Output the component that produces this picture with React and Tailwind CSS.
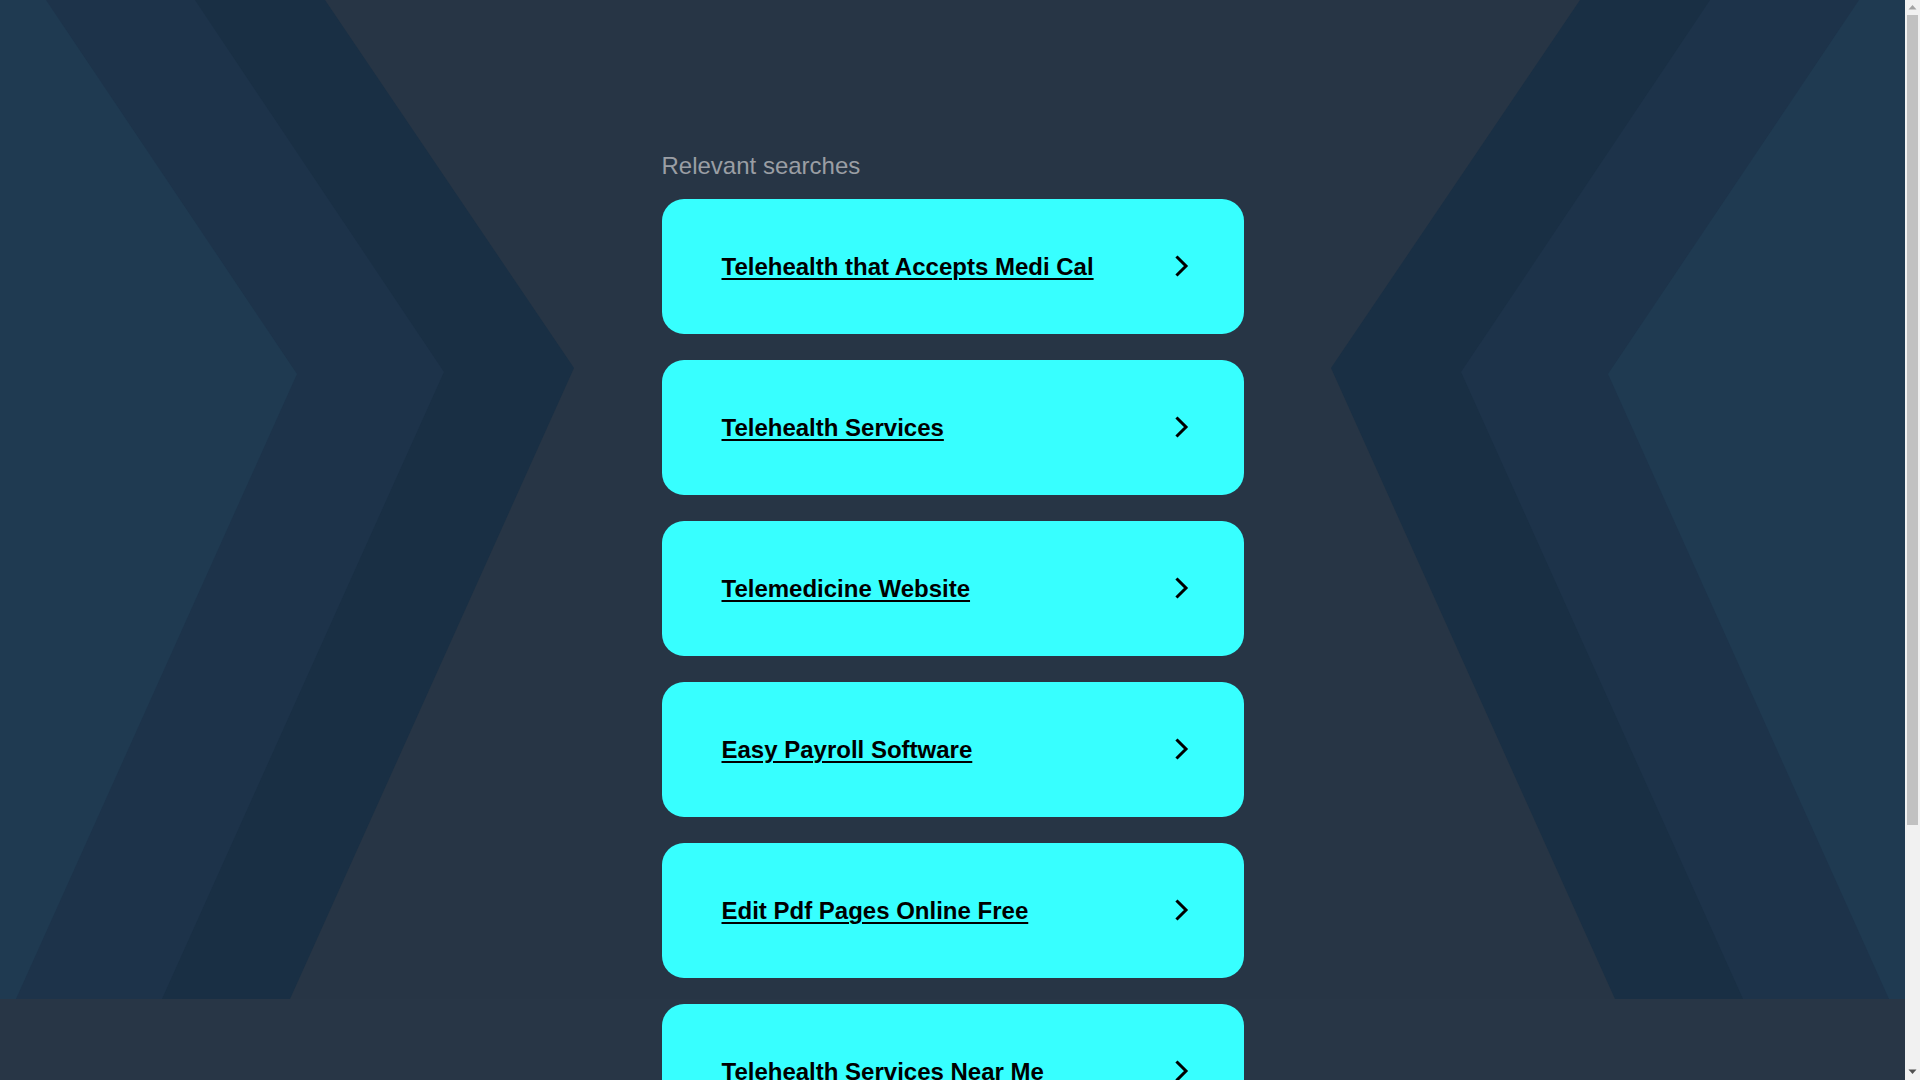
const searches = [
  'Telehealth that Accepts Medi Cal',
  'Telehealth Services',
  'Telemedicine Website',
  'Easy Payroll Software',
  'Edit Pdf Pages Online Free',
  'Telehealth Services Near Me',
]

function Backdrop() {
  return (
    <svg
      className="absolute left-0 top-0 w-full h-[999px]"
      viewBox="0 0 1905 999"
      preserveAspectRatio="none"
      aria-hidden="true"
    >
      <rect x="0" y="0" width="1905" height="999" fill="#273545" />
      {/* left chevrons */}
      <polygon points="0,0 325,0 574,368 290,999 0,999" fill="#192f44" />
      <polygon points="0,0 195,0 444,372 162,999 0,999" fill="#1d334a" />
      <polygon points="0,0 46,0 297,374 16,999 0,999" fill="#1f3a51" />
      {/* right chevrons */}
      <polygon points="1905,0 1580,0 1331,368 1615,999 1905,999" fill="#192f44" />
      <polygon points="1905,0 1710,0 1461,372 1743,999 1905,999" fill="#1d334a" />
      <polygon points="1905,0 1859,0 1608,374 1889,999 1905,999" fill="#1f3a51" />
    </svg>
  )
}

function Chevron() {
  return (
    <svg width="14" height="22" viewBox="0 0 14 22" className="shrink-0">
      <polyline
        points="2.5,2.5 11,11 2.5,19.5"
        fill="none"
        stroke="#000"
        strokeWidth="3"
        strokeLinecap="square"
      />
    </svg>
  )
}

// window scrollbar as seen in the capture
function Scrollbar() {
  return (
    <div className="w-[15px] shrink-0 h-full bg-[#f1f1f1] flex flex-col items-center">
      <svg width="15" height="15" viewBox="0 0 15 15" className="shrink-0">
        <polygon points="3.5,9.5 7.5,5 11.5,9.5" fill="#a3a3a3" />
      </svg>
      <div className="w-[11px] h-[810px] bg-[#c1c1c1]" />
      <div className="flex-1" />
      <svg width="15" height="15" viewBox="0 0 15 15" className="shrink-0">
        <polygon points="3.5,4.5 11.5,4.5 7.5,9" fill="#505050" />
      </svg>
    </div>
  )
}

export default function App() {
  return (
    <div className="h-[1080px] flex overflow-hidden bg-[#283646]">
      <main className="relative flex-1 h-full overflow-hidden font-['Liberation_Sans',Arial,sans-serif]">
        <Backdrop />

        <div className="relative mx-auto w-[582px] pt-[152px] pb-[261px]">
          <h1 className="text-[24px] leading-[1.2] font-normal text-[#9a9ea4] mb-[18px]">
            Relevant searches
          </h1>

          <div className="flex flex-col gap-[26px]">
            {searches.map((s) => (
              <a
                key={s}
                href="#"
                className="h-[135px] rounded-[22px] bg-[#37ffff] flex items-center justify-between pl-[60px] pr-[55px]"
              >
                <span className="pt-[2px] text-[24px] font-bold text-black underline decoration-2 underline-offset-[3px]">
                  {s}
                </span>
                <Chevron />
              </a>
            ))}
          </div>
        </div>
      </main>
      <Scrollbar />
    </div>
  )
}
